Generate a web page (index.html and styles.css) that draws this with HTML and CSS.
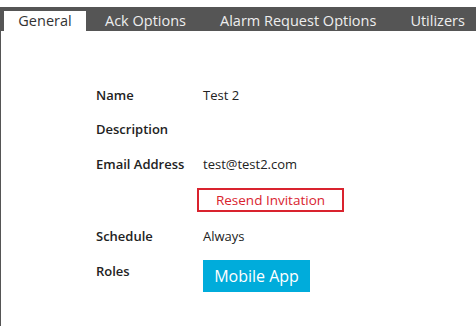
FILE: index.html
```html
<!DOCTYPE html>
<html>
<head>
<meta charset="utf-8">
<link rel="stylesheet" href="styles.css">
</head>
<body>
<div class="tabs">
  <div class="tab active">General</div>
  <div class="tab">Ack Options</div>
  <div class="tab">Alarm Request Options</div>
  <div class="tab">Utilizers</div>
</div>
<div class="panel">
  <div class="form">
    <div class="label">Name</div><div class="value">Test 2</div>
    <div class="label">Description</div><div class="value"></div>
    <div class="label">Email Address</div><div class="value">test@test2.com</div>
    <div class="label"></div><div class="value"><span class="resend">Resend Invitation</span></div>
    <div class="label">Schedule</div><div class="value">Always</div>
    <div class="label">Roles</div><div class="value"><span class="role">Mobile App</span></div>
  </div>
</div>
</body>
</html>
```

FILE: styles.css
```css
html, body {
  margin: 0;
  padding: 0;
  background: #fff;
  font-family: "Open Sans", "Noto Sans", sans-serif;
  overflow: hidden;
}
body {
  width: 476px;
  height: 326px;
  padding-top: 7px;
  box-sizing: border-box;
  display: flex;
  flex-direction: column;
}
.tabs {
  height: 24px;
  background: #555555;
  display: flex;
  align-items: flex-end;
  padding-left: 4px;
  white-space: nowrap;
}
.tab {
  height: 20px;
  line-height: 20px;
  font-size: 14.5px;
  color: #eeeeee;
  padding: 0 15px;
}
.tab.active {
  background: #fff;
  color: #333;
  width: 82px;
  box-sizing: border-box;
  text-align: center;
  padding: 0;
}
.tab:nth-child(2) { padding: 0 17px 0 19px; }
.tab:nth-child(3) { padding: 0 17px 0 17px; }
.tab:nth-child(4) { padding: 0 0 0 17px; }
.panel {
  flex: 1;
  border-left: 1px solid #555;
  padding: 46px 0 0 95px;
}
.form {
  display: grid;
  grid-template-columns: 107px auto;
  grid-template-rows: 35px 34px 35px 37px 35px 36px;
  align-items: center;
  font-size: 13px;
  color: #222;
}
.label {
  font-weight: 600;
  display: flex;
  align-items: center;
  height: 100%;
}
.value {
  display: flex;
  align-items: center;
  height: 100%;
}
.resend {
  display: inline-block;
  border: 2px solid #d9232e;
  color: #d9232e;
  width: 147px;
  height: 24px;
  box-sizing: border-box;
  line-height: 20px;
  text-align: center;
  font-size: 13.5px;
  margin-left: -6px;
}
.role {
  display: inline-block;
  background: #00acdb;
  color: #fff;
  font-size: 16px;
  width: 107px;
  height: 32px;
  line-height: 32px;
  text-align: center;
  margin-top: 10px;
}
```
